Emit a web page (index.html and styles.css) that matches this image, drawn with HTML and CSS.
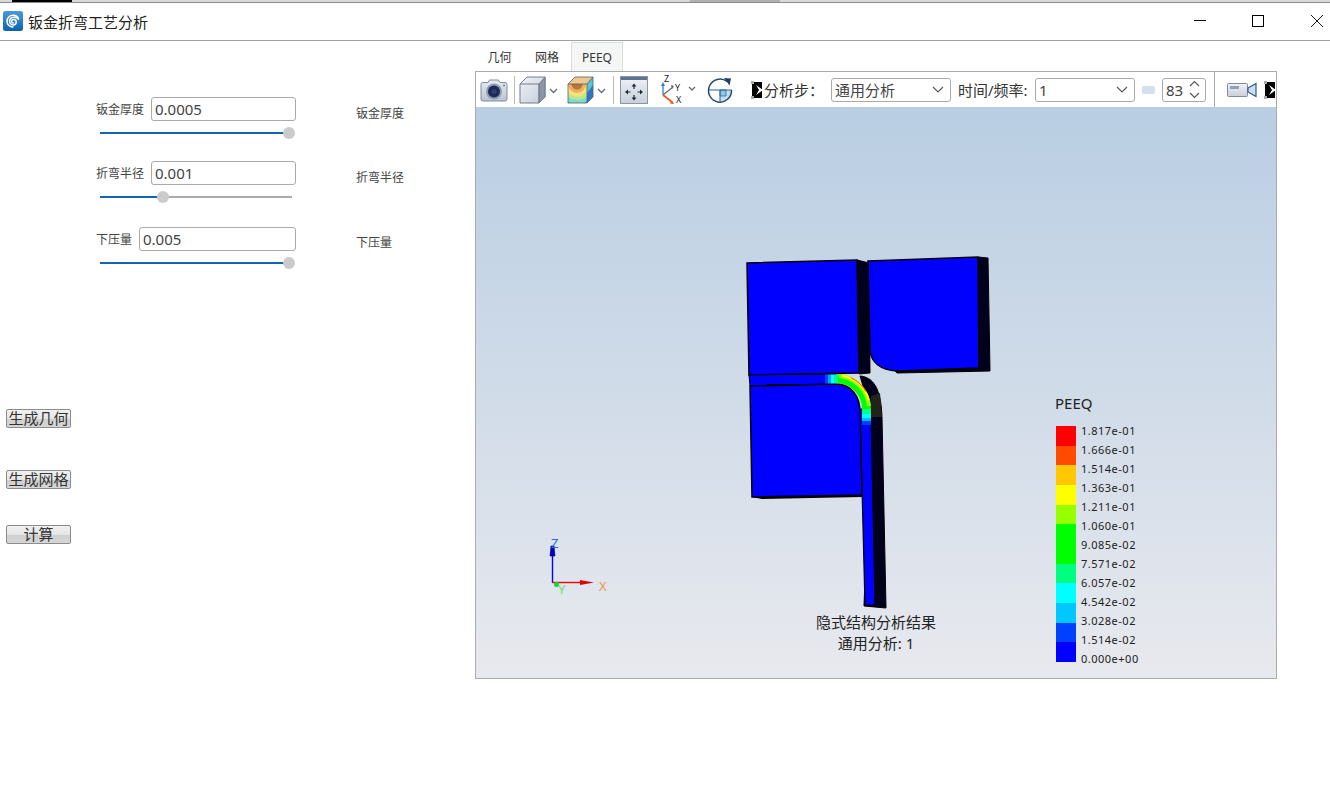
FILE: index.html
```html
<!DOCTYPE html>
<html lang="zh-CN">
<head>
<meta charset="utf-8">
<title>钣金折弯工艺分析</title>
<link rel="stylesheet" href="styles.css">
</head>
<body>
<svg class="defs" width="0" height="0" aria-hidden="true">
  <defs>
    <linearGradient id="gBody" x1="0" y1="0" x2="0" y2="1"><stop offset="0" stop-color="#e6ebf2"/><stop offset="1" stop-color="#b9c4d3"/></linearGradient>
    <linearGradient id="gFace" x1="0" y1="0" x2="1" y2="1"><stop offset="0" stop-color="#f1f3f6"/><stop offset="1" stop-color="#c4ccd8"/></linearGradient>
    <linearGradient id="gFit" x1="0" y1="0" x2="0" y2="1"><stop offset="0" stop-color="#f0f2f6"/><stop offset="1" stop-color="#c9d0da"/></linearGradient>
    <linearGradient id="gLogo" x1="0" y1="0" x2="0" y2="1"><stop offset="0" stop-color="#4a9ad8"/><stop offset="1" stop-color="#0d62b0"/></linearGradient>
    <clipPath id="clipFace"><rect x="1" y="8" width="19" height="19"/></clipPath>
    <filter id="soft" x="-20%" y="-20%" width="140%" height="140%"><feGaussianBlur stdDeviation=".7"/></filter>
  </defs>
</svg>

<div class="top-strip"><span class="strip-black"></span><span class="strip-grey"></span></div>

<header class="titlebar">
  <svg class="logo" viewBox="0 0 20 20">
    <rect width="20" height="20" rx="2.5" fill="url(#gLogo)"/>
    <path d="M10 16c-3.600 0-6-2.500-6-5.800C4 6.800 6.600 4.300 10 4.300c3 0 5.300 1.900 5.800 4.400-1-1.700-3-2.700-5-2.500C8.200 6.400 6.500 8.200 6.600 10.500c.1 2 1.700 3.500 3.600 3.400 1.700-.1 3-1.400 3-3 0-1.400-1.100-2.500-2.500-2.500-1.200 0-2.100.9-2.100 2 0 1 .8 1.700 1.700 1.700" fill="none" stroke="#fff" stroke-width="1.500" stroke-linecap="round"/>
  </svg>
  <span class="app-title">钣金折弯工艺分析</span>
  <div class="win-controls">
    <svg class="win-btn" viewBox="0 0 12 12"><path d="M0 5.500H12" stroke="#000" fill="none"/></svg>
    <svg class="win-btn win-max" viewBox="0 0 12 12"><rect x=".5" y=".5" width="11" height="11" stroke="#000" fill="none"/></svg>
    <svg class="win-btn" viewBox="0 0 12 12"><path d="M0 0L12 12M12 0L0 12" stroke="#000" stroke-width=".9" fill="none"/></svg>
  </div>
</header>

<main class="workspace">
  <section class="left-panel">
    <div class="param param-first">
      <div class="param-fields">
        <div class="field-row"><label class="field-label">钣金厚度</label><input class="field-input" type="text" value="0.0005"></div>
        <div class="slider"><span class="slider-track"><span class="slider-fill" style="width:100%"></span></span><span class="slider-thumb" style="left:183px"></span></div>
      </div>
      <span class="param-note">钣金厚度</span>
    </div>
    <div class="param param-second">
      <div class="param-fields">
        <div class="field-row"><label class="field-label">折弯半径</label><input class="field-input" type="text" value="0.001"></div>
        <div class="slider"><span class="slider-track"><span class="slider-fill" style="width:33%"></span></span><span class="slider-thumb" style="left:57px"></span></div>
      </div>
      <span class="param-note">折弯半径</span>
    </div>
    <div class="param param-third">
      <div class="param-fields">
        <div class="field-row"><label class="field-label">下压量</label><input class="field-input" type="text" value="0.005"></div>
        <div class="slider"><span class="slider-track"><span class="slider-fill" style="width:100%"></span></span><span class="slider-thumb" style="left:183px"></span></div>
      </div>
      <span class="param-note note-third">下压量</span>
    </div>
    <div class="actions">
      <button class="action action-geo">生成几何</button>
      <button class="action action-mesh">生成网格</button>
      <button class="action action-calc">计算</button>
    </div>
  </section>

  <section class="right-panel">
    <nav class="tabs">
      <span class="tab tab-geo">几何</span>
      <span class="tab tab-mesh">网格</span>
      <span class="tab tab-active">PEEQ</span>
    </nav>
    <div class="viewer">
      <div class="toolbar">
        <svg class="icon icon-camera" viewBox="0 0 28 24">
          <path d="M1 6.500a2 2 0 0 1 2-2H8l1.500-2.500h9L20 4.500h5a2 2 0 0 1 2 2V21a2 2 0 0 1-2 2H3a2 2 0 0 1-2-2z" fill="url(#gBody)" stroke="#7d8ba0"/>
          <circle cx="14" cy="13.500" r="8" fill="#8e9db2"/>
          <circle cx="14" cy="13.500" r="6" fill="#1d2a55"/>
          <circle cx="14" cy="13.500" r="2.600" fill="#33406e"/>
          <circle cx="24" cy="7.500" r="1" fill="#6d7c92"/>
        </svg>
        <span class="tool-sep sep-a"></span>
        <svg class="icon icon-cube" viewBox="0 0 42 28">
          <path d="M1 8L8 1H26V21L20 27H1z" fill="url(#gFace)" stroke="#717d8f"/>
          <path d="M20 8L26 1V21L20 27z" fill="#8b95a4" stroke="#717d8f"/>
          <path d="M1 8H20V27" fill="none" stroke="#717d8f"/>
          <path d="M31 13l3.500 3.500L38 13" fill="none" stroke="#5e6b80" stroke-width="1.300"/>
        </svg>
        <svg class="icon icon-result" viewBox="0 0 42 28">
          <g clip-path="url(#clipFace)">
            <rect x="1" y="8" width="19" height="19" fill="#5aa8e8"/>
            <circle cx="10" cy="8" r="20" fill="#7fdcc8"/>
            <circle cx="10" cy="8" r="16" fill="#b8e890"/>
            <circle cx="10" cy="8" r="12.500" fill="#f6e27a"/>
            <circle cx="10" cy="8" r="9" fill="#eeb060"/>
            <circle cx="10" cy="8" r="5.500" fill="#b8743c"/>
          </g>
          <path d="M1 8L8 1H26L20 8z" fill="#eec88d"/>
          <path d="M20 8L26 1V21L20 27z" fill="#2e74c9"/>
          <path d="M20 8L26 1V9L20 17z" fill="#56c6d2"/>
          <path d="M1 8L8 1H26V21L20 27H1zM1 8H20V27M20 8L26 1" fill="none" stroke="#54606f" stroke-width=".8"/>
          <path d="M31 13l3.500 3.500L38 13" fill="none" stroke="#5e6b80" stroke-width="1.300"/>
        </svg>
        <span class="tool-sep sep-b"></span>
        <svg class="icon icon-fit" viewBox="0 0 28 28">
          <rect x=".5" y=".5" width="27" height="27" fill="url(#gFit)" stroke="#8a95a6"/>
          <rect x="1" y="1" width="26" height="3" fill="#5f7291"/>
          <path d="M14 10v3M14 19v3M7.500 16h3M17.500 16h3" stroke="#1e2a3d" stroke-width="1.200" fill="none"/>
          <path d="M14 7.500l2.500 3h-5zM14 24.500l2.500-3h-5zM5 16l3-2.500v5zM23 16l-3-2.500v5z" fill="#1e2a3d"/>
        </svg>
        <svg class="icon icon-axes" viewBox="0 0 44 35">
          <path d="M3 23V13" stroke="#2a7fd0" stroke-width="1.300" fill="none"/>
          <path d="M3 10l2 4H1z" fill="#2a7fd0"/>
          <path d="M3 23l10-8" stroke="#5a6672" stroke-width="1.200" fill="none"/>
          <path d="M11 13l3 1-2 3z" fill="#5a6672"/>
          <path d="M3 23l9 7" stroke="#e8531f" stroke-width="1.600" fill="none"/>
          <path d="M14 32l-4-.5 2-3z" fill="#e8531f"/>
          <text class="axis-glyph" x="4" y="10">Z</text>
          <text class="axis-glyph" x="15" y="19">Y</text>
          <text class="axis-glyph" x="16" y="31">X</text>
          <path d="M29 15l3 3 3-3" fill="none" stroke="#5e6b80" stroke-width="1.300"/>
        </svg>
        <svg class="icon icon-rotate" viewBox="0 0 26 26">
          <path d="M13 13H24.500A11.500 11.500 0 0 1 13 24.500z" fill="#bfe0f3"/>
          <path d="M13 13h6v6h-6z" fill="#8cc6e8" stroke="#2a5f8a" stroke-width=".7"/>
          <path d="M1.500 13H24.500M13 13V24.500" stroke="#2a5f8a" fill="none"/>
          <path d="M20 4.500A11.500 11.500 0 1 0 24.500 13" fill="none" stroke="#2a4a6a" stroke-width="1.500"/>
          <path d="M17 1l7 .5-1.500 7z" fill="#243f5c"/>
        </svg>
        <svg class="icon icon-broken" viewBox="0 0 12 18">
          <g filter="url(#soft)">
            <rect x="1" y="1" width="10" height="16" fill="#000"/>
            <path d="M5 4L12 9L5 14L8 9z" fill="#fff"/>
            <path d="M0 0H3V3H0zM0 15H3V18H0z" fill="#aaa"/>
          </g>
        </svg>
        <span class="tool-label label-step">分析步：</span>
        <span class="combo combo-step"><span class="combo-text">通用分析</span><svg class="combo-arrow" viewBox="0 0 12 7"><path d="M1 1l5 5 5-5" fill="none" stroke="#555" stroke-width="1.100"/></svg></span>
        <span class="tool-label label-time">时间/频率:</span>
        <span class="combo combo-time"><span class="combo-text">1</span><svg class="combo-arrow" viewBox="0 0 12 7"><path d="M1 1l5 5 5-5" fill="none" stroke="#555" stroke-width="1.100"/></svg></span>
        <span class="mini-slider"></span>
        <span class="spin"><span class="combo-text">83</span><svg class="spin-arrows" viewBox="0 0 11 19"><path d="M1 6l4.500-4.500L10 6M1 13l4.500 4.500L10 13" fill="none" stroke="#555" stroke-width="1.100"/></svg></span>
        <span class="tool-sep sep-c"></span>
        <svg class="icon icon-video" viewBox="0 0 30 16">
          <rect x=".5" y="1.500" width="20" height="13" rx="1" fill="url(#gFit)" stroke="#7f8b9c"/>
          <rect x="3" y="4" width="9" height="3" fill="#8ea0b8"/>
          <path d="M21 6l8-4.500v13L21 10z" fill="#c7dff2" stroke="#2e5b8d" stroke-width="1.200"/>
        </svg>
        <svg class="icon icon-broken-end" viewBox="0 0 12 18">
          <g filter="url(#soft)">
            <rect x="1" y="1" width="10" height="16" fill="#000"/>
            <path d="M5 4L12 9L5 14L8 9z" fill="#fff"/>
            <path d="M0 0H3V3H0zM0 15H3V18H0z" fill="#aaa"/>
          </g>
        </svg>
      </div>

      <div class="scene">
        <svg class="model" viewBox="476 107 800 571">
          <!-- upper-left die -->
          <path d="M857 260L869 263L870 373L859 374z" fill="#00001e" stroke="#000"/>
          <path d="M747 263L857 260L859 373L749 375z" fill="#0000ff" stroke="#000" stroke-width="1.500"/>
          <!-- upper-right die -->
          <path d="M978 257L988 258L990 371L897 373L895 371L979 368z" fill="#00001e" stroke="#000"/>
          <path d="M868 261L978 257L979 368L897 371C880 370 871 362 870 350z" fill="#0000ff" stroke="#000" stroke-width="1.500"/>
          <!-- sheet back side -->
          <path d="M860 376C873 377 881 388 882 417L886 608L864 606L871 412z" fill="#00001e" stroke="#000"/>
          <path d="M871 396L880 393L882 417L871 417z" fill="#222218"/>
          <!-- sheet strip and leg -->
          <path d="M749 375L836 374V384L750 386z" fill="#0000ff" stroke="#000" stroke-width="1"/>
          <path d="M860 409L871 409L875 605L865 605z" fill="#0000ff" stroke="#000" stroke-width="1.200"/>
          <!-- lower flange -->
          <path d="M752 497L762 499L862 497L862 494z" fill="#000"/>
          <path d="M750 386L836 384C851 384 860 396 860 412L862 495L752 497z" fill="#0000ff" stroke="#000" stroke-width="1.500"/>
          <path d="M767 384.500H805" stroke="#000" stroke-width="1" fill="none"/>
          <!-- bend result bands -->
          <path class="band" d="M825 379H828" stroke="#0040ff"/>
          <path class="band" d="M828 379H831" stroke="#00a4ff"/>
          <path class="band" d="M831 379H834" stroke="#00ffff"/>
          <path class="band" d="M834 379H838" stroke="#00ff90"/>
          <path class="band" d="M838 378.500A30.500 30.500 0 0 1 866.500 409" stroke="#00ff00"/>
          <path class="band" d="M866.500 409V414" stroke="#00ff90"/>
          <path class="band" d="M866.500 414V418" stroke="#00ffff"/>
          <path class="band" d="M866.500 418V421" stroke="#00b8ff"/>
          <path class="band" d="M866.500 421V425" stroke="#0040ff"/>
          <path class="band-outer" d="M838.900 376.100A33 33 0 0 1 868.900 406.100" stroke="#90ff00"/>
          <path class="band-edge" d="M841.900 375.500A34 34 0 0 1 868.800 400.200" stroke="#ffff00"/>
          <path class="band-red" d="M850.600 377.600A34.600 34.600 0 0 1 866 391.700" stroke="#ff5000"/>
          <!-- triad -->
          <path d="M552.500 583V553" stroke="#0000ff" stroke-width="1.400" fill="none"/>
          <path d="M550 556h5l-1-10h-3z" fill="#0000c8" stroke="#00005a" stroke-width=".6"/>
          <path d="M552 582.500H584" stroke="#ff0000" stroke-width="1.400" fill="none"/>
          <path d="M580 580l14 2.500-14 2.500z" fill="#e00000"/>
          <circle cx="556.500" cy="584.500" r="2.500" fill="#00dc3c"/>
          <text class="axis-z" x="551" y="548">Z</text>
          <text class="axis-x" x="599" y="591">X</text>
          <text class="axis-y" x="558" y="594">Y</text>
        </svg>

        <div class="legend">
          <div class="legend-title">PEEQ</div>
          <div class="legend-body">
            <div class="legend-bar">
              <span class="swatch c1"></span><span class="swatch c2"></span><span class="swatch c3"></span><span class="swatch c4"></span><span class="swatch c5"></span><span class="swatch c6"></span><span class="swatch c6"></span><span class="swatch c7"></span><span class="swatch c8"></span><span class="swatch c9"></span><span class="swatch c10"></span><span class="swatch c11"></span>
            </div>
            <div class="legend-values">
              <span>1.817e-01</span><span>1.666e-01</span><span>1.514e-01</span><span>1.363e-01</span><span>1.211e-01</span><span>1.060e-01</span><span>9.085e-02</span><span>7.571e-02</span><span>6.057e-02</span><span>4.542e-02</span><span>3.028e-02</span><span>1.514e-02</span><span>0.000e+00</span>
            </div>
          </div>
        </div>

        <div class="caption">
          <div>隐式结构分析结果</div>
          <div>通用分析: 1</div>
        </div>
      </div>
    </div>
  </section>
</main>
</body>
</html>
```
FILE: styles.css
```css
* { box-sizing: border-box; }
html, body { margin: 0; padding: 0; }
body {
  width: 1330px;
  height: 800px;
  overflow: hidden;
  background: #fff;
  color: #333;
  font-family: "Noto Sans", "Noto Sans CJK SC", sans-serif;
}
.defs { position: absolute; }

.top-strip {
  display: flex;
  height: 3px;
  background: #d8d8d8;
  border-bottom: 1px solid #8c8c8c;
}
.strip-black { width: 60px; height: 2px; margin-left: 12px; background: #000; }
.strip-grey { width: 90px; height: 2px; margin-left: 618px; background: #b0b0b0; }

.titlebar {
  display: flex;
  align-items: center;
  height: 38px;
  background: #fff;
  border-bottom: 1px solid #a0a0a0;
}
.logo { width: 20px; height: 20px; margin: 0 0 1px 3px; flex: none; }
.app-title {
  margin-left: 5px;
  font-size: 15px;
  line-height: 20px;
  color: #222;
}
.win-controls { display: flex; margin: 0 7px 1px auto; gap: 46px; }
.win-btn { width: 12px; height: 12px; display: block; }
.win-max { margin-right: 1px; }

.workspace { display: flex; height: 759px; }

.left-panel { width: 475px; flex: none; }
.param {
  display: grid;
  grid-template-columns: 200px 80px;
  column-gap: 60px;
  margin-left: 96px;
}
.param-first { margin-top: 56px; }
.param-second { margin-top: 21px; }
.param-third { margin-top: 23px; }
.field-row { display: flex; align-items: center; gap: 7px; height: 24px; }
.field-label { font-size: 12px; line-height: 17px; color: #444; flex: none; }
.field-input {
  flex: 1;
  min-width: 0;
  height: 24px;
  padding: 0 3px;
  border: 1px solid #aaa;
  border-radius: 3px;
  font: 15px/22px "Noto Sans", "Noto Sans CJK SC", sans-serif;
  color: #444;
  background: #fff;
  outline: none;
}
.slider {
  position: relative;
  display: flex;
  align-items: center;
  width: 192px;
  height: 14px;
  margin: 5px 0 0 4px;
}
.slider-track { display: block; width: 100%; height: 2px; background: #aaa; }
.slider-fill { display: block; height: 100%; background: #1464b4; }
.slider-thumb {
  position: absolute;
  top: 1px;
  width: 12px;
  height: 12px;
  border-radius: 50%;
  background: #cbcbcb;
}
.param-note { margin-top: 8px; font-size: 12px; line-height: 17px; color: #444; }
.note-third { margin-top: 7px; }

.actions { display: flex; flex-direction: column; align-items: flex-start; margin-left: 6px; }
.action {
  width: 65px;
  height: 19px;
  padding: 0 0 2px;
  border: 1px solid #8c8c8c;
  border-radius: 2px;
  background: linear-gradient(#f0f0f0 0, #e6e6e6 50%, #cfcfcf 52%, #d6d6d6 100%);
  font: 15px/16px "Noto Sans", "Noto Sans CJK SC", sans-serif;
  color: #333;
  overflow: hidden;
  white-space: nowrap;
}
.action-geo { margin-top: 139px; }
.action-mesh { margin-top: 42px; }
.action-calc { margin-top: 36px; }

.right-panel { width: 802px; flex: none; }
.tabs { display: flex; height: 29px; margin-top: 1px; padding-left: 1px; }
.tab {
  display: flex;
  align-items: center;
  justify-content: center;
  padding-top: 1px;
  font-size: 12px;
  line-height: 17px;
  color: #333;
}
.tab-geo { width: 47px; }
.tab-mesh { width: 48px; }
.tab-active { width: 52px; background: #f4f5f5; border: 1px solid #dcdcdc; border-bottom: 0; }

.viewer { height: 608px; border: 1px solid #aaa; display: flex; flex-direction: column; }
.toolbar {
  display: flex;
  align-items: center;
  flex: none;
  height: 35px;
  overflow: hidden;
  background: #fff;
}
.icon { display: block; flex: none; }
.icon-camera { width: 28px; height: 24px; margin-left: 4px; }
.tool-sep { flex: none; width: 1px; height: 28px; background: #bbb; }
.sep-a { margin-left: 6px; }
.icon-cube { width: 42px; height: 28px; margin-left: 4px; }
.icon-result { width: 42px; height: 28px; margin-left: 6px; }
.sep-b { margin-left: 4px; }
.icon-fit { width: 28px; height: 28px; margin-left: 6px; }
.icon-axes { width: 44px; height: 35px; margin-left: 12px; }
.icon-rotate { width: 26px; height: 26px; margin-left: 3px; }
.icon-broken { width: 12px; height: 18px; margin-left: 18px; }
.tool-label { flex: none; font-size: 15px; line-height: 20px; color: #333; white-space: nowrap; }
.label-step { width: 67px; margin-left: 1px; }
.combo {
  display: flex;
  align-items: center;
  flex: none;
  height: 24px;
  padding: 0 3px;
  border: 1px solid #aaa;
  border-radius: 3px;
  background: #fff;
}
.combo-text { font-size: 15px; line-height: 20px; color: #444; }
.combo-arrow { width: 12px; height: 7px; margin-left: auto; margin-right: 3px; }
.combo-step { width: 120px; }
.label-time { width: 70px; margin-left: 7px; }
.combo-time { width: 100px; margin-left: 7px; }
.mini-slider { flex: none; width: 13px; height: 8px; margin-left: 7px; border-radius: 2px; background: #d3dfec; }
.spin {
  display: flex;
  align-items: center;
  flex: none;
  width: 44px;
  height: 24px;
  margin-left: 7px;
  padding: 0 3px;
  border: 1px solid #aaa;
  border-radius: 3px;
}
.spin-arrows { width: 11px; height: 19px; margin-left: auto; margin-right: 2px; }
.sep-c { margin-left: 8px; height: 35px; background: #aaa; }
.icon-video { width: 30px; height: 16px; margin-left: 12px; }
.icon-broken-end { width: 12px; height: 18px; margin-left: 7px; }
.axis-glyph { font-size: 9px; fill: #222; font-family: "Noto Sans", sans-serif; }

.scene {
  position: relative;
  flex: 1;
  background: linear-gradient(#b9cee3, #e8e9ee);
}
.model { display: block; width: 100%; height: 100%; }
.band { fill: none; stroke-width: 9; }
.band-outer { fill: none; stroke-width: 4; }
.band-edge { fill: none; stroke-width: 2; }
.band-red { fill: none; stroke-width: 1; }
.axis-z, .axis-x, .axis-y { font-size: 13px; font-family: "Noto Sans", sans-serif; }
.axis-z { fill: #2a6ae0; }
.axis-x { fill: #ee9550; }
.axis-y { fill: #70e070; }

.legend { position: absolute; left: 579px; top: 286px; }
.legend-title { font-size: 15px; line-height: 20px; color: #222; }
.legend-body { display: flex; margin-top: 13px; padding-left: 1px; }
.legend-bar { display: flex; flex-direction: column; width: 20px; height: 236px; }
.swatch { flex: 1; }
.c1 { background: #ff0000; }
.c2 { background: #ff4a00; }
.c3 { background: #ffc800; }
.c4 { background: #ffff00; }
.c5 { background: #96ff00; }
.c6 { background: #00ff00; }
.c7 { background: #00ff80; }
.c8 { background: #00ffff; }
.c9 { background: #00c8ff; }
.c10 { background: #0040ff; }
.c11 { background: #0000ff; }
.legend-values { display: flex; flex-direction: column; margin: -5px 0 0 5px; }
.legend-values span { height: 19px; font-size: 11px; line-height: 19px; letter-spacing: .5px; color: #222; }

.caption {
  position: absolute;
  left: 300px;
  top: 505px;
  width: 200px;
  text-align: center;
  font-size: 15px;
  line-height: 21px;
  color: #222;
}
```
